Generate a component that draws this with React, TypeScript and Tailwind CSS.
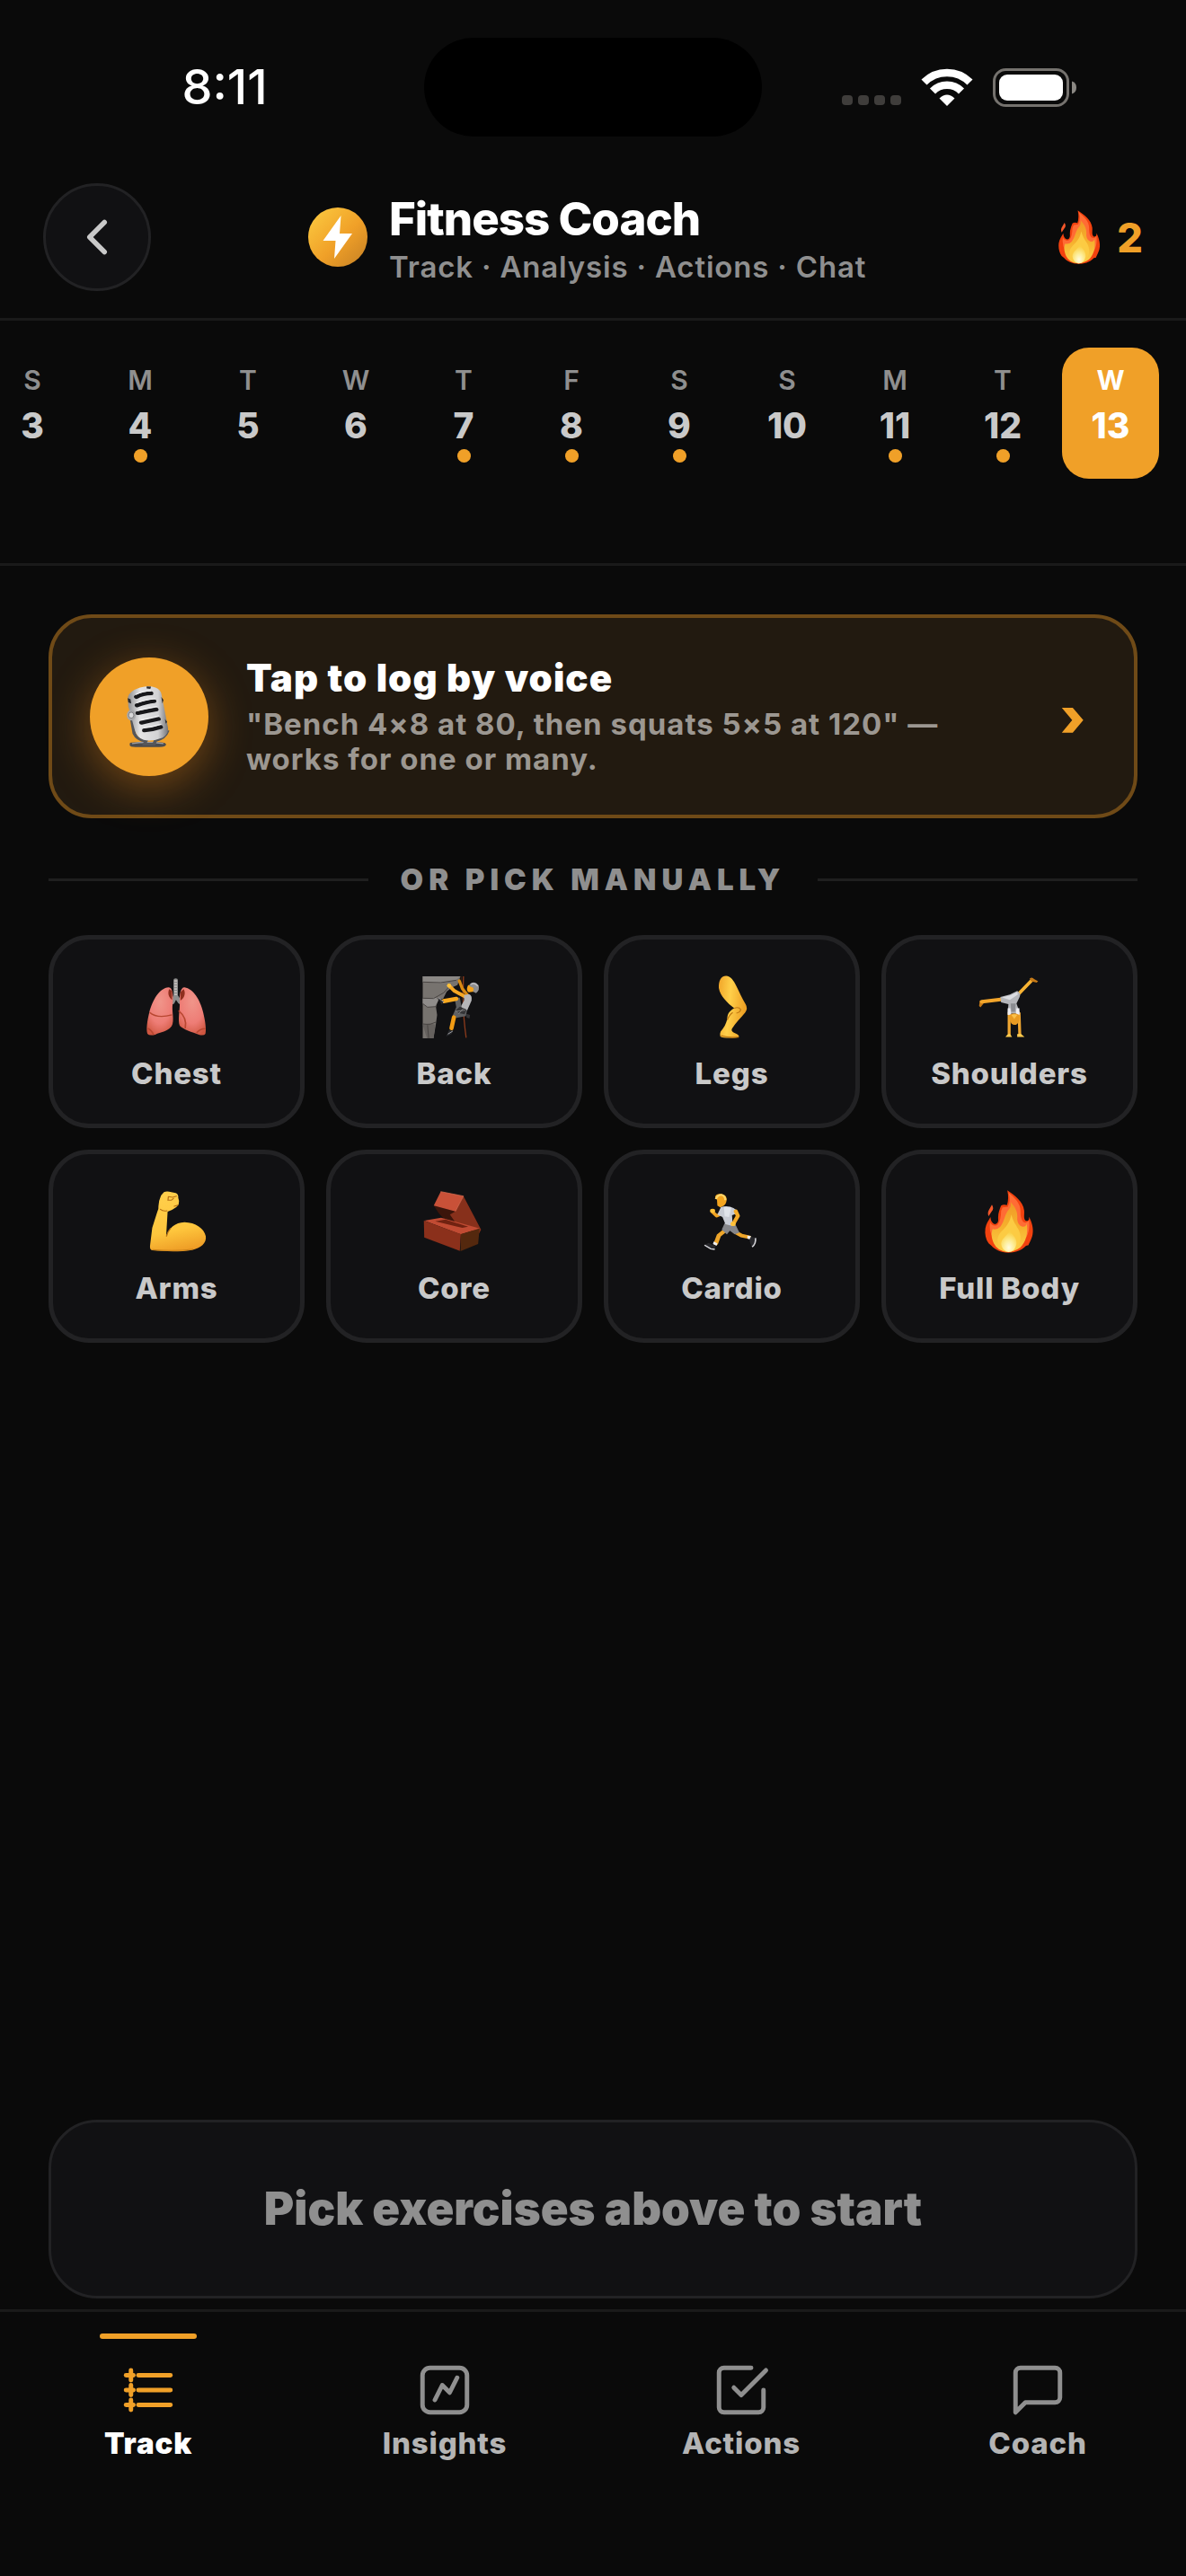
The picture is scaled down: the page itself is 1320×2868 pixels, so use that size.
import React from "react";

type IconProps = { className?: string };

const DAYS = [
  { letter: "S", day: 3, logged: false },
  { letter: "M", day: 4, logged: true },
  { letter: "T", day: 5, logged: false },
  { letter: "W", day: 6, logged: false },
  { letter: "T", day: 7, logged: true },
  { letter: "F", day: 8, logged: true },
  { letter: "S", day: 9, logged: true },
  { letter: "S", day: 10, logged: false },
  { letter: "M", day: 11, logged: true },
  { letter: "T", day: 12, logged: true },
  { letter: "W", day: 13, logged: false, selected: true },
];

function Lungs() {
  return (
    <svg viewBox="0 0 72 72" className="size-[72px]" aria-hidden="true">
      <defs>
        <radialGradient id="lung" cx="0.5" cy="0.3" r="0.75">
          <stop offset="0" stopColor="#f0958a" />
          <stop offset="0.6" stopColor="#ee7d76" />
          <stop offset="1" stopColor="#cf5640" />
        </radialGradient>
      </defs>
      <g transform="translate(-120.5 -55) scale(.408 .333)">
        <path d="M380 184V236L371 258M380 236L392 258" fill="none" stroke="#8d8d8d" strokeWidth="12" strokeLinecap="round" />
        <path d="M380 184V236" fill="none" stroke="#c4bebb" strokeWidth="7" strokeDasharray="5 4" />
        <path d="M361 208C335 210 317 250 308 292C302 322 299 350 303 363Q308 371 324 366C340 357 356 358 369 338C378 318 368 286 372 262C374 236 372 208 361 208Z" fill="url(#lung)" />
        <path d="M404 208C428 212 447 250 455 292C461 322 464 350 461 363Q458 370 445 367C424 357 400 348 391 336C385 318 392 282 391 258C390 232 393 208 404 208Z" fill="url(#lung)" />
        <path d="M309 292C322 306 345 308 370 300M304 345C312 350 316 356 320 366M388 286C402 300 410 322 406 345M437 360C444 350 452 346 461 346" fill="none" stroke="#b84731" strokeWidth="4" />
        <path d="M362 214C358 228 360 240 370 250V220ZM402 214C408 228 404 244 393 252V224Z" fill="#8f2f1e" />
      </g>
    </svg>
  );
}

function Climber() {
  return (
    <svg viewBox="0 0 72 72" className="size-[72px]" aria-hidden="true">
      <g transform="translate(-9.5 -5) scale(.3333)">
        <path d="M30 21H156L146 50L128 58L110 72L98 96L82 100L74 122L78 150L74 180L66 228H30Z" fill="#77736f" />
        <path d="M30 21H156L140 34L90 44L30 40Z" fill="#8b8885" />
        <path d="M30 96L74 92L82 102L70 122L44 124L30 112Z" fill="#8f8c8a" />
        <path d="M30 182L52 178L72 182L66 228H44Z" fill="#65615e" />
        <path d="M30 40L90 42L142 34M32 94L66 95L100 76L116 58M30 112L46 124L76 122M30 180L52 182L74 174M46 184L50 228" fill="none" stroke="#484442" strokeWidth="3" />
        <path d="M166 21C164 90 163 140 175 226" fill="none" stroke="#8a3a1c" strokeWidth="4" />
        <path d="M158 21C160 60 163 70 164 100" fill="none" stroke="#3c2415" strokeWidth="3" />
        <path d="M152 36L162 62L178 82" fill="none" stroke="#d98a12" strokeWidth="10" strokeLinecap="round" />
        <path d="M118 52L136 70L170 88" fill="none" stroke="#f7a823" strokeWidth="12" strokeLinecap="round" strokeLinejoin="round" />
        <circle cx="118" cy="52" r="7" fill="#ffc23d" />
        <path d="M182 50C176 60 176 70 184 74L202 72L198 52Z" fill="#f5a31b" />
        <path d="M186 48Q202 34 216 50Q222 66 208 77L198 72L200 60L186 54Z" fill="#8e8e90" />
        <path d="M190 48Q204 40 214 54" fill="none" stroke="#bdbdc0" strokeWidth="4" />
        <path d="M168 84L184 80Q196 84 193 102L178 136L156 124L168 102Z" fill="#b6b6b8" />
        <path d="M136 92L154 92L160 126L178 134L174 154L142 160L130 152L142 124Z" fill="#5f6062" />
        <path d="M100 104L142 96" fill="none" stroke="#f9a91f" strokeWidth="14" strokeLinecap="round" />
        <path d="M134 158L126 194" fill="none" stroke="#f29c14" strokeWidth="14" strokeLinecap="round" />
        <path d="M80 92L100 104L94 116ZM118 200L132 202L126 214L108 222Z" fill="#26272b" />
        <path d="M82 92L101 108M114 214L130 204" fill="none" stroke="#a0a0a4" strokeWidth="3" />
        <path d="M140 134L154 122L176 132L170 148L152 144ZM176 146L188 150L186 162L176 158Z" fill="#343436" />
        <path d="M140 138L172 134M150 146L166 128" fill="none" stroke="#9b9b9b" strokeWidth="2" />
      </g>
    </svg>
  );
}

function Leg() {
  return (
    <svg viewBox="0 0 72 72" className="size-[72px]" aria-hidden="true">
      <defs>
        <linearGradient id="leg" x1="0" y1="0" x2="1" y2="0.2">
          <stop offset="0" stopColor="#f0a428" />
          <stop offset="0.45" stopColor="#ffd04a" />
          <stop offset="1" stopColor="#eda024" />
        </linearGradient>
      </defs>
      <g transform="translate(-118.5 -55) scale(.408 .333)">
        <path d="M362 170C374 171 382 184 390 204C398 224 406 246 415 264Q422 278 414 292C402 310 388 326 378 346Q374 355 386 361Q398 367 397 374Q390 378 372 377Q352 377 346 372Q344 364 347 356C356 344 362 330 365 314C365 296 372 286 384 278C366 260 346 238 342 210C341 188 347 170 362 170Z" fill="url(#leg)" />
        <path d="M384 278Q396 272 402 282Q400 292 390 294M365 318Q370 300 380 292" fill="none" stroke="#c17a14" strokeWidth="3" />
        <path d="M348 370Q370 378 396 374" fill="none" stroke="#c17a14" strokeWidth="4" />
      </g>
    </svg>
  );
}

function Cartwheel() {
  return (
    <svg viewBox="0 0 72 72" className="size-[72px]" aria-hidden="true">
      <g transform="translate(-427.5 -55) scale(.408 .333)">
        <path d="M1160 230L1196 184" stroke="#f7b233" strokeWidth="10" strokeLinecap="round" />
        <path d="M1190 178Q1197 172 1202 180L1213 188L1209 192L1194 188ZM1054 252L1068 250L1064 262L1056 275L1052 270Z" fill="#c77a17" />
        <path d="M1060 256L1116 248" stroke="#f2a52b" strokeWidth="12" strokeLinecap="round" />
        <path d="M1134 292V368M1161 292L1163 368" stroke="#f0a732" strokeWidth="8" />
        <path d="M1124 374Q1128 364 1136 363L1142 374ZM1156 374V364L1166 363L1176 374Z" fill="#ffcb4e" />
        <path d="M1110 240L1136 232L1156 220Q1168 228 1162 242L1154 262L1164 296H1130L1132 264L1112 258Z" fill="#b5b6ba" />
        <path d="M1114 242L1138 234L1156 224L1158 232L1136 250Z" fill="#dcdde1" />
        <path d="M1138 262L1152 262L1150 290L1140 290Z" fill="#8b8c91" />
        <path d="M1130 278H1137L1140 300H1130ZM1154 278H1162V300H1152Z" fill="#eeeef2" />
        <path d="M1134 300Q1148 290 1162 300Q1166 318 1156 330Q1148 338 1140 328Q1132 314 1134 300Z" fill="#e99b22" />
        <path d="M1140 300Q1148 296 1156 300L1148 314Z" fill="#fbc14a" />
      </g>
    </svg>
  );
}

function Arm() {
  return (
    <svg viewBox="0 0 72 72" className="size-[72px]" aria-hidden="true">
      <defs>
        <linearGradient id="arm" x1="0.3" y1="0" x2="0.5" y2="1">
          <stop offset="0" stopColor="#ffcf4c" />
          <stop offset="0.65" stopColor="#fec63d" />
          <stop offset="1" stopColor="#ee9d26" />
        </linearGradient>
      </defs>
      <g transform="translate(-120.5 -294) scale(.408 .333)">
        <path d="M348 893Q354 889 362 891L380 896Q388 900 387 912Q391 922 388 934Q382 946 370 952L358 958L354 1040C362 1012 378 994 404 993C434 994 458 1014 462 1040C465 1064 448 1080 424 1086C392 1093 348 1091 316 1087Q309 1086 310 1072L316 1012L330 958Q334 950 333 940Q334 920 340 904Z" fill="url(#arm)" />
        <path d="M355 1040C357 1030 360 1022 366 1014M338 950Q346 958 356 955M360 908L372 910L382 906M360 908L359 920L368 920L374 914M386 936L376 940" fill="none" stroke="#b66f13" strokeWidth="3" strokeLinecap="round" />
        <path d="M316 1085Q380 1092 428 1083" fill="none" stroke="#c98018" strokeWidth="3" />
      </g>
    </svg>
  );
}

function Bricks() {
  return (
    <svg viewBox="0 0 72 72" className="size-[72px]" aria-hidden="true">
      <g transform="translate(-429.5 -294) scale(.408 .333)">
        <path d="M1084 938L1140 956L1160 1010L1118 990L1098 964Z" fill="#3c150b" />
        <path d="M1165 906L1213 1018L1208 1030L1150 1006L1128 968L1143 957Z" fill="#87301b" />
        <path d="M1103 891L1165 906L1143 957L1084 938Z" fill="#c95138" />
        <path d="M1058 988L1104 978L1210 1014L1158 1034Z" fill="#c14b33" />
        <path d="M1088 990L1116 984L1178 1008L1162 1012Z" fill="#702211" />
        <path d="M1057 988L1158 1033L1155 1089L1058 1044Z" fill="#8b301b" />
        <path d="M1158 1033L1209 1014L1205 1066L1157 1090Z" fill="#54280e" />
        <path d="M1103 891L1165 906L1143 957" fill="none" stroke="#dc6e52" strokeWidth="2" />
      </g>
    </svg>
  );
}

function Runner() {
  return (
    <svg viewBox="0 0 72 72" className="size-[72px]" aria-hidden="true">
      <g transform="translate(-118.5 -294) scale(.408 .333)">
        <path d="M352 964L336 972L324 958" fill="none" stroke="#f0a323" strokeWidth="10" strokeLinecap="round" strokeLinejoin="round" />
        <circle cx="325" cy="955" r="7" fill="#ffc23c" />
        <path d="M360 1020L342 1038L334 1064" fill="none" stroke="#eda52a" strokeWidth="12" strokeLinecap="round" />
        <path d="M386 1026L404 1038L424 1043" fill="none" stroke="#eda52a" strokeWidth="12" strokeLinecap="round" />
        <path d="M304 1068L314 1062L324 1068L334 1072L330 1084L320 1083L306 1074ZM424 1046L430 1042L440 1044L443 1052L440 1066L433 1076L428 1064Z" fill="#27272b" />
        <path d="M303 1070L320 1082L331 1084M442 1046Q444 1064 433 1076" fill="none" stroke="#d6d6da" strokeWidth="4" />
        <path d="M328 1058L338 1064L336 1072L326 1066ZM420 1038L430 1040L426 1050L420 1048Z" fill="#efeff2" />
        <path d="M358 996L388 1002L398 1028L386 1034L372 1022L364 1034L350 1018Z" fill="#85868a" />
        <path d="M348 942Q368 936 382 946L392 954L386 966L378 970L380 1006L360 1000L352 976L338 968Z" fill="#c8ccd4" />
        <path d="M356 942L376 944L370 976L358 974Z" fill="#e0e4ea" />
        <path d="M388 956L394 972L382 998" fill="none" stroke="#f5ab27" strokeWidth="11" strokeLinecap="round" strokeLinejoin="round" />
        <circle cx="381" cy="999" r="7" fill="#ffc23c" />
        <path d="M332 910Q332 900 346 899Q362 900 363 914Q364 930 356 938L346 944L338 938L337 918Z" fill="#f4a51f" />
        <path d="M334 916Q338 902 350 902Q360 906 360 920" fill="none" stroke="#ffd66a" strokeWidth="6" />
      </g>
    </svg>
  );
}

function Flame({ className = "size-[72px]" }: IconProps) {
  return (
    <svg viewBox="0 0 72 72" className={className} aria-hidden="true">
      <defs>
        <linearGradient id="flame-in" x1="0" y1="0" x2="0" y2="1">
          <stop offset="0" stopColor="#ef9a26" />
          <stop offset="0.5" stopColor="#f6b02d" />
          <stop offset="1" stopColor="#fbd04b" />
        </linearGradient>
        <radialGradient id="flame-core" cx="0.5" cy="0.8" r="0.7">
          <stop offset="0" stopColor="#fffbe0" />
          <stop offset="0.5" stopColor="#fdeb90" />
          <stop offset="1" stopColor="#fbcf45" />
        </radialGradient>
      </defs>
      <g transform="translate(-427.5 -294) scale(.408 .333)">
        <path d="M1129 887C1150 905 1172 924 1175 954C1176 970 1172 982 1180 989Q1190 990 1188 975C1196 992 1201 1014 1198 1034C1196 1050 1188 1064 1187 1070L1180 1072C1166 1090 1148 1095 1132 1095C1110 1094 1094 1084 1086 1072L1078 1064C1070 1050 1067 1032 1069 1014C1071 998 1078 988 1083 976Q1084 996 1095 1000Q1106 998 1104 978C1104 962 1108 950 1112 938Q1118 932 1128 936Q1134 914 1129 887Z" fill="#f2420f" />
        <path d="M1132 894C1150 912 1165 930 1165 956Q1164 980 1172 992Q1182 1000 1188 986Q1192 1020 1180 1046L1090 1046Q1078 1020 1082 994Q1090 1010 1102 1002Q1112 988 1112 956L1116 944L1130 942Q1140 920 1132 894Z" fill="#ff6c35" />
        <path d="M1087 935Q1094 948 1086 958L1078 973Q1074 962 1079 952Z" fill="#f4572a" />
        <path d="M1138 926C1152 946 1158 958 1156 984Q1158 1004 1170 1008Q1180 1010 1182 998C1186 1030 1180 1060 1164 1078Q1148 1092 1130 1093Q1102 1090 1092 1064C1086 1046 1084 1032 1089 1016Q1100 1020 1110 1008C1122 990 1122 964 1134 950Q1140 940 1138 926Z" fill="url(#flame-in)" />
        <path d="M1140 968C1144 988 1150 998 1158 1014C1168 1034 1168 1064 1154 1080Q1144 1093 1130 1093Q1114 1090 1106 1072C1098 1050 1104 1034 1118 1018C1128 1006 1136 992 1140 968Z" fill="#fccb43" />
        <path d="M1136 1020C1142 1034 1156 1046 1154 1066Q1150 1092 1132 1093Q1114 1088 1112 1066C1112 1046 1130 1038 1136 1020Z" fill="url(#flame-core)" />
      </g>
    </svg>
  );
}

function Microphone() {
  return (
    <svg viewBox="0 0 132 132" className="size-[132px]" aria-hidden="true">
      <defs>
        <linearGradient id="mic" x1="0" y1="0" x2="1" y2="0">
          <stop offset="0" stopColor="#8e8e90" />
          <stop offset="0.3" stopColor="#e4e4e5" />
          <stop offset="0.75" stopColor="#d2d2d4" />
          <stop offset="1" stopColor="#747477" />
        </linearGradient>
      </defs>
      <g transform="translate(-60 -62) scale(.408 .333)">
        <path d="M256 474Q256 470 270 470H340Q355 471 355 477Q355 486 336 486H272Q256 486 256 480Z" fill="#4a4b4f" />
        <path d="M262 474Q300 466 348 474" fill="none" stroke="#9a9ba0" strokeWidth="4" />
        <path d="M260 384L268 440Q276 462 300 466L296 476H322L326 464Q352 458 360 430" fill="none" stroke="#55565a" strokeWidth="9" />
        <path d="M251 318Q256 298 284 287Q310 278 326 287Q340 292 343 312L360 420Q364 440 346 454Q318 468 294 462Q276 454 270 430L252 350Z" fill="url(#mic)" />
        <path d="M274 318Q292 306 314 306M276 346Q302 334 322 332M278 372Q306 364 328 360M288 404Q312 398 334 392M296 430Q318 428 340 419" fill="none" stroke="#18181b" strokeWidth="13" strokeLinecap="round" />
        <path d="M272 310Q292 298 314 298M274 338Q302 326 326 324M276 364Q306 356 330 350M286 395Q312 389 336 381M294 421Q318 419 342 409" fill="none" stroke="#f4f4f5" strokeWidth="3" />
        <path d="M250 322L258 326L260 340L252 336ZM302 283L314 284L312 291L302 290ZM342 318L348 328L345 340ZM352 392L358 402L354 408Z" fill="#2a2a2d" />
        <ellipse cx="260" cy="379" rx="12" ry="18" fill="#a7a7a9" />
        <ellipse cx="260" cy="379" rx="7" ry="10" fill="#d9d9da" stroke="#6a6a6d" strokeWidth="2" />
      </g>
    </svg>
  );
}

const MUSCLES = [
  { label: "Chest", Icon: Lungs },
  { label: "Back", Icon: Climber },
  { label: "Legs", Icon: Leg },
  { label: "Shoulders", Icon: Cartwheel },
  { label: "Arms", Icon: Arm },
  { label: "Core", Icon: Bricks },
  { label: "Cardio", Icon: Runner },
  { label: "Full Body", Icon: Flame },
];

const TABS = [
  { label: "Track", active: true, paths: ["M8 6h13", "M8 12h13", "M8 18h13", "M3 6h3", "M3 12h3", "M3 18h3", "M5 4v4", "M5 10v4", "M5 16v4"] },
  { label: "Insights", active: false, paths: ["M6 3h12a3 3 0 0 1 3 3v12a3 3 0 0 1-3 3H6a3 3 0 0 1-3-3V6a3 3 0 0 1 3-3z", "M8 16l3-6 3 3 3-6"] },
  { label: "Actions", active: false, paths: ["M9 11l3 3L22 4", "M21 12v7a2 2 0 0 1-2 2H5a2 2 0 0 1-2-2V5a2 2 0 0 1 2-2h11"] },
  { label: "Coach", active: false, paths: ["M21 15a2 2 0 0 1-2 2H7l-4 4V5a2 2 0 0 1 2-2h14a2 2 0 0 1 2 2z"] },
];

function StatusBar() {
  return (
    <div className="grid h-[194px] grid-cols-[1fr_376px_1fr] items-center">
      <div className="pl-7 text-center text-[54px] leading-none font-medium text-white">8:11</div>
      <div className="h-[110px] rounded-full bg-black" />
      <div className="flex items-center justify-center gap-[22px] pr-8">
        <svg viewBox="0 0 66 44" className="h-11 w-[66px]" fill="#3f3d3b" aria-hidden="true">
          <rect x="0" y="31" width="12" height="11" rx="4" />
          <rect x="18" y="31" width="12" height="11" rx="4" />
          <rect x="36" y="31" width="12" height="11" rx="4" />
          <rect x="54" y="31" width="12" height="11" rx="4" />
        </svg>
        <svg viewBox="0 0 58 44" className="h-11 w-[58px]" fill="none" aria-hidden="true">
          <path d="M3.500 16.500A36 36 0 0 1 54.500 16.500" stroke="#fff" strokeWidth="8.500" />
          <path d="M13 26.500A22.500 22.500 0 0 1 45 26.500" stroke="#fff" strokeWidth="8.500" />
          <path d="M20.500 34.500Q29 26.500 37.500 34.500L29 43Z" fill="#fff" />
        </svg>
        <svg viewBox="0 0 94 44" className="h-11 w-[94px]" fill="none" aria-hidden="true">
          <rect x="1.500" y="2.500" width="82" height="40" rx="13" stroke="#75726e" strokeWidth="3" />
          <rect x="7" y="8" width="71" height="29" rx="9" fill="#fff" />
          <path d="M88 15.500Q93 17 93 22.500Q93 28 88 29.500Z" fill="#8b8883" />
        </svg>
      </div>
    </div>
  );
}

export default function App() {
  return (
    <div className="flex min-h-screen flex-col bg-[#0a0a0a] font-['Inter',sans-serif] text-white">
      <StatusBar />

      <header className="flex items-center border-b-3 border-[#1a1a1a] px-12 pt-2.5 pb-[30px]">
        <button type="button" aria-label="Back" className="flex size-[120px] shrink-0 items-center justify-center rounded-full border-3 border-[#222224] bg-[#111113]">
          <svg viewBox="0 0 24 24" className="size-[66px]" fill="none" stroke="#c9c9c9" strokeWidth="2" strokeLinecap="round" strokeLinejoin="round" aria-hidden="true">
            <path d="M15 18l-6-6 6-6" />
          </svg>
        </button>
        <div className="flex flex-1 items-center justify-center gap-6">
          <svg viewBox="0 0 66 66" className="size-[66px]" aria-hidden="true">
            <defs>
              <linearGradient id="bolt" x1="0" y1="0" x2="1" y2="1">
                <stop offset="0.1" stopColor="#fac53d" />
                <stop offset="0.55" stopColor="#f0a028" />
                <stop offset="1" stopColor="#c47f24" />
              </linearGradient>
            </defs>
            <circle cx="33" cy="33" r="33" fill="url(#bolt)" />
            <path d="M36.500 9L16.500 37H30.500L29 57L49 29H35Z" fill="#fff" />
          </svg>
          <div className="pt-1.5">
            <h1 className="text-[51px] leading-[60px] font-extrabold tracking-[-1px]">Fitness Coach</h1>
            <p className="text-[33px] leading-[46px] font-semibold tracking-wide text-[#8f8f8f]">Track · Analysis · Actions · Chat</p>
          </div>
        </div>
        <button type="button" aria-label="2 day streak" className="flex items-center gap-2.5 pl-8 text-[45px] leading-none font-extrabold text-[#f0a028]">
          <Flame className="size-[62px]" />
          <span>2</span>
        </button>
      </header>

      <nav aria-label="Days" className="flex justify-end gap-3 overflow-hidden border-b-3 border-[#1a1a1a] pt-[30px] pr-[30px] pb-[94px]">
        {DAYS.map((d) => (
          <button
            key={d.day}
            type="button"
            className={
              d.selected
                ? "flex h-[146px] w-[108px] shrink-0 flex-col items-center rounded-[30px] bg-[#f0a028] pt-[18px] text-white"
                : "flex h-[146px] w-[108px] shrink-0 flex-col items-center pt-[18px] text-[#c9c9c9]"
            }
          >
            <span className={d.selected ? "text-[30px] leading-9 font-bold" : "text-[30px] leading-9 font-semibold text-[#8f8f8f]"}>{d.letter}</span>
            <span className="mt-[9px] text-[39px] leading-[48px] font-extrabold">{d.day}</span>
            {d.logged && <span className="mt-0.5 size-[15px] rounded-full bg-[#f0a028]" />}
          </button>
        ))}
      </nav>

      <main className="flex flex-1 flex-col px-[54px] pt-[54px] pb-3">
        <button type="button" className="flex min-h-[227px] items-center gap-[42px] rounded-[48px] border-4 border-[#6f4a17] bg-[#221a10] px-[42px] text-left">
          <span className="size-[132px] shrink-0 rounded-full bg-[#f0a028] shadow-[0_12px_48px_rgba(240,140,30,0.4)]">
            <Microphone />
          </span>
          <span className="flex flex-1 flex-col gap-2">
            <span className="text-[42px] leading-[48px] font-black tracking-wide">Tap to log by voice</span>
            <span className="max-w-[840px] text-[33px] leading-[39px] font-bold tracking-[1px] text-[#9c9791]">
              "Bench 4×8 at 80, then squats 5×5 at 120" — works for one or many.
            </span>
          </span>
          <span className="pr-3 text-[60px] leading-[60px] font-black text-[#f0a028]">›</span>
        </button>

        <div className="mt-12 flex items-center gap-9">
          <span className="h-[3px] flex-1 bg-[#1f1f1f]" />
          <h2 className="text-[33px] leading-10 font-black tracking-[6px] text-[#8f8f8f]">OR PICK MANUALLY</h2>
          <span className="h-[3px] flex-1 bg-[#1f1f1f]" />
        </div>

        <div className="mt-[42px] grid grid-cols-4 gap-6">
          {MUSCLES.map(({ label, Icon }) => (
            <button key={label} type="button" className="flex h-[215px] flex-col items-center rounded-[45px] border-5 border-[#222224] bg-[#111113] pt-[39px]">
              <Icon />
              <span className="mt-[18px] text-[33px] leading-10 font-extrabold tracking-wide text-[#c9c9c9]">{label}</span>
            </button>
          ))}
        </div>

        <button type="button" className="mt-auto h-[199px] rounded-[54px] border-3 border-[#222224] bg-[#111113] text-[51px] font-black text-[#8f8f8f]">
          Pick exercises above to start
        </button>
      </main>

      <nav aria-label="Main" className="grid grid-cols-4 border-t-3 border-[#1a1a1a] pt-6 pb-32">
        {TABS.map((t) => (
          <button key={t.label} type="button" className="flex flex-col items-center">
            <span className={t.active ? "h-1.5 w-[108px] rounded-full bg-[#f0a028]" : "h-1.5 w-[108px]"} />
            <svg viewBox="0 0 24 24" className="mt-6 size-[66px]" fill="none" stroke={t.active ? "#f0a028" : "#8f8f8f"} strokeWidth="1.8" strokeLinecap="round" strokeLinejoin="round" aria-hidden="true">
              {t.paths.map((d) => (
                <path key={d} d={d} />
              ))}
            </svg>
            <span className={t.active ? "mt-1.5 text-[33px] leading-10 font-black tracking-wide text-white" : "mt-1.5 text-[33px] leading-10 font-extrabold tracking-wide text-[#b4b4b4]"}>{t.label}</span>
          </button>
        ))}
      </nav>
    </div>
  );
}
